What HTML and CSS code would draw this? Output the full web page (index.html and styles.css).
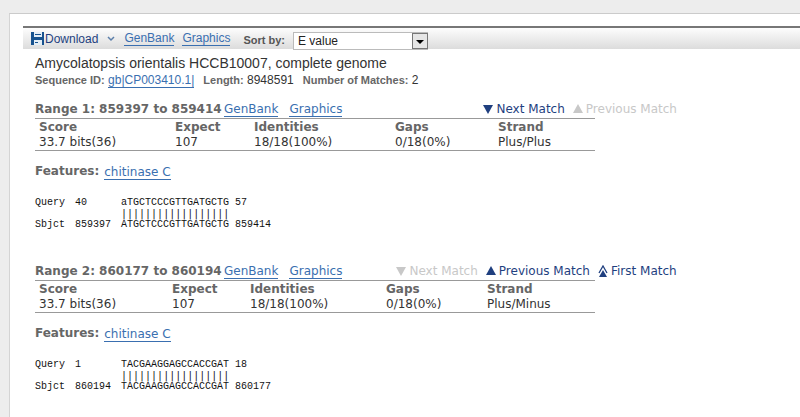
FILE: index.html
```
<!DOCTYPE html>
<html lang="en">

<head>
  <meta charset="UTF-8" />
  <meta name="viewport" content="width=device-width, initial-scale=1.0" />
  <title>Alignments</title>
  <link rel="stylesheet" href="styles.css">
</head>

<body>
  <main class="panel">
    <div class="toolbar">
      <button class="download" type="button">
        <svg width="13" height="13" viewBox="0 0 13 13">
          <path d="M0 0h13v13H0z" fill="#17528f" />
          <path d="M3 0h8v5H3zM3 8h8v5H3z" fill="#e4eef6" />
          <path d="M4 2.5h6M4 10.500h3" stroke="#17528f" />
        </svg>
        <span>Download</span>
        <svg class="chevron" width="8" height="6" viewBox="0 0 8 6">
          <path d="M1 1l3 3 3-3" fill="none" stroke="#5c7faa" stroke-width="1.5" />
        </svg>
      </button>
      <a href="#">GenBank</a>
      <a href="#">Graphics</a>
      <label for="sort">Sort by:</label>
      <div class="select">
        <select id="sort">
          <option>E value</option>
          <option>Score</option>
        </select>
        <span class="arrow"></span>
      </div>
    </div>

    <div class="content">
      <h1>Amycolatopsis orientalis HCCB10007, complete genome</h1>
      <div class="info">
        <span><b>Sequence ID:</b> <a href="#">gb|CP003410.1|</a></span>
        <span><b>Length:</b> 8948591</span>
        <span><b>Number of Matches:</b> 2</span>
      </div>

      <section class="range">
        <div class="range-head">
          <h2>Range 1: 859397 to 859414</h2>
          <a href="#">GenBank</a>
          <a href="#">Graphics</a>
          <div class="nav nav-first">
            <button type="button">
              <svg width="10" height="10" viewBox="0 0 10 10"><path d="M0 1h10L5 10z" /></svg>
              Next Match
            </button>
            <button type="button" disabled>
              <svg width="10" height="10" viewBox="0 0 10 10"><path d="M0 9h10L5 0z" /></svg>
              Previous Match
            </button>
          </div>
        </div>
        <table class="stats stats-first">
          <thead>
            <tr><th>Score</th><th>Expect</th><th>Identities</th><th>Gaps</th><th>Strand</th></tr>
          </thead>
          <tbody>
            <tr><td>33.7 bits(36)</td><td>107</td><td>18/18(100%)</td><td>0/18(0%)</td><td>Plus/Plus</td></tr>
          </tbody>
        </table>
        <div class="features"><b>Features:</b> <a href="#">chitinase C</a></div>
        <div class="alignment">
          <span>Query</span><span>40</span><span>aTGCTCCCGTTGATGCTG</span><span>57</span>
          <span class="bars">||||||||||||||||||</span>
          <span>Sbjct</span><span>859397</span><span>ATGCTCCCGTTGATGCTG</span><span>859414</span>
        </div>
      </section>

      <section class="range">
        <div class="range-head">
          <h2>Range 2: 860177 to 860194</h2>
          <a href="#">GenBank</a>
          <a href="#">Graphics</a>
          <div class="nav nav-second">
            <button type="button" disabled>
              <svg width="10" height="10" viewBox="0 0 10 10"><path d="M0 1h10L5 10z" /></svg>
              Next Match
            </button>
            <button type="button">
              <svg width="10" height="10" viewBox="0 0 10 10"><path d="M0 9h10L5 0z" /></svg>
              Previous Match
            </button>
            <button type="button">
              <svg width="10" height="13" viewBox="0 0 10 13">
                <path d="M1 12h8L5 5z" />
                <path d="M1 8l4-7 4 7" fill="none" stroke="currentColor" stroke-width="1.3" />
              </svg>
              First Match
            </button>
          </div>
        </div>
        <table class="stats stats-second">
          <thead>
            <tr><th>Score</th><th>Expect</th><th>Identities</th><th>Gaps</th><th>Strand</th></tr>
          </thead>
          <tbody>
            <tr><td>33.7 bits(36)</td><td>107</td><td>18/18(100%)</td><td>0/18(0%)</td><td>Plus/Minus</td></tr>
          </tbody>
        </table>
        <div class="features"><b>Features:</b> <a href="#">chitinase C</a></div>
        <div class="alignment">
          <span>Query</span><span>1</span><span>TACGAAGGAGCCACCGAT</span><span>18</span>
          <span class="bars">||||||||||||||||||</span>
          <span>Sbjct</span><span>860194</span><span>TACGAAGGAGCCACCGAT</span><span>860177</span>
        </div>
      </section>
    </div>
  </main>
</body>

</html>
```

FILE: styles.css
```
* {
  box-sizing: border-box;
}

body {
  margin: 0;
  padding: 13px 0 0 9px;
  background-color: #ededed;
  color: #333;
  font-family: "Liberation Sans", Arial, sans-serif;
  font-size: 12px;
  line-height: 16px;
}

a {
  color: #3a6fb0;
  text-decoration: none;
  border-bottom: 1px solid #3a6fb0;
}

button {
  display: flex;
  align-items: center;
  padding: 0;
  border: none;
  background: none;
  color: #1f3f7f;
  font: inherit;
  white-space: nowrap;
}

h1,
h2 {
  margin: 0;
}

.panel {
  min-height: calc(100vh - 13px);
  padding: 12px 0 0 13px;
  border-top: 1px solid #cbcbcb;
  border-left: 1px solid #d4d4d4;
  background-color: #fff;
}

/* toolbar */
.toolbar {
  display: flex;
  align-items: center;
  height: 23px;
  padding-left: 8px;
  border-top: 2px solid #777;
  background: linear-gradient(#fdfdfd, #dcdcdc);
}

.toolbar a {
  margin-right: 8px;
  line-height: 14px;
}

.download {
  gap: 1px;
  margin-right: 9px;
}

.chevron {
  margin-left: 8px;
}

.toolbar label {
  margin: 3px 8px 0 5px;
  color: #555;
  font-size: 11px;
  font-weight: bold;
}

.select {
  position: relative;
  width: 135px;
  margin-top: 5px;
}

.select select {
  display: block;
  width: 100%;
  height: 18px;
  padding: 0 20px 0 4px;
  border: 1px solid #bbb;
  border-radius: 0;
  background-color: #fff;
  color: #222;
  font: inherit;
  appearance: none;
}

.arrow {
  position: absolute;
  top: 1px;
  right: 0;
  width: 16px;
  height: 16px;
  border: 1px solid #777;
  background-color: #e6e6e6;
  pointer-events: none;
}

.arrow::after {
  content: "";
  position: absolute;
  top: 6px;
  left: 3px;
  border: 4px solid transparent;
  border-top-color: #000;
  border-bottom: none;
}

/* sequence header */
.content {
  padding: 5px 0 0 12px;
}

h1 {
  font-size: 14px;
  font-weight: normal;
  line-height: 18px;
}

.info {
  display: flex;
  gap: 9px;
  margin-bottom: 12px;
}

.info b {
  font-size: 11px;
}

.info b,
.features b {
  color: #666;
}

/* one match */
.range {
  margin-bottom: 32px;
  font-family: "DejaVu Sans", Verdana, sans-serif;
}

.range-head {
  display: flex;
  align-items: center;
  height: 18px;
}

h2 {
  width: 189px;
  color: #666;
  font-size: 12px;
  white-space: nowrap;
}

.range-head a {
  margin-right: 11px;
  line-height: 14px;
}

.nav {
  display: flex;
  gap: 8px;
}

.nav-first {
  margin-left: 130px;
}

.nav-second {
  margin-left: 43px;
}

.nav button {
  gap: 3px;
}

.nav button:disabled {
  color: #c8c8c8;
}

.nav svg {
  fill: currentColor;
}

.stats {
  width: 560px;
  border-top: 1px solid #999;
  border-bottom: 1px solid #999;
  border-collapse: collapse;
  table-layout: fixed;
  line-height: 15px;
}

.stats th,
.stats td {
  padding: 0 0 0 4px;
  text-align: left;
}

.stats th {
  padding-top: 1px;
  color: #666;
}

.stats th:nth-child(1) {
  width: 136px;
}

.stats th:nth-child(2) {
  width: 79px;
}

.stats th:nth-child(3) {
  width: 141px;
}

.stats th:nth-child(4) {
  width: 103px;
}

.stats-second th:nth-child(1) {
  width: 133px;
}

.stats-second th:nth-child(2) {
  width: 78px;
}

.stats-second th:nth-child(3) {
  width: 136px;
}

.stats-second th:nth-child(4) {
  width: 101px;
}

.features {
  display: flex;
  align-items: flex-start;
  gap: 5px;
  margin: 12px 0 17px;
}

.features a {
  margin-top: 2px;
  line-height: 14px;
}

.alignment {
  display: grid;
  grid-template-columns: 40px 46px 114px auto;
  justify-content: start;
  color: #111;
  font-family: "Liberation Mono", "Courier New", monospace;
  font-size: 10px;
  line-height: 11px;
}

.bars {
  grid-column: 3 / 5;
  font-family: "DejaVu Sans Mono", monospace;
}
```
